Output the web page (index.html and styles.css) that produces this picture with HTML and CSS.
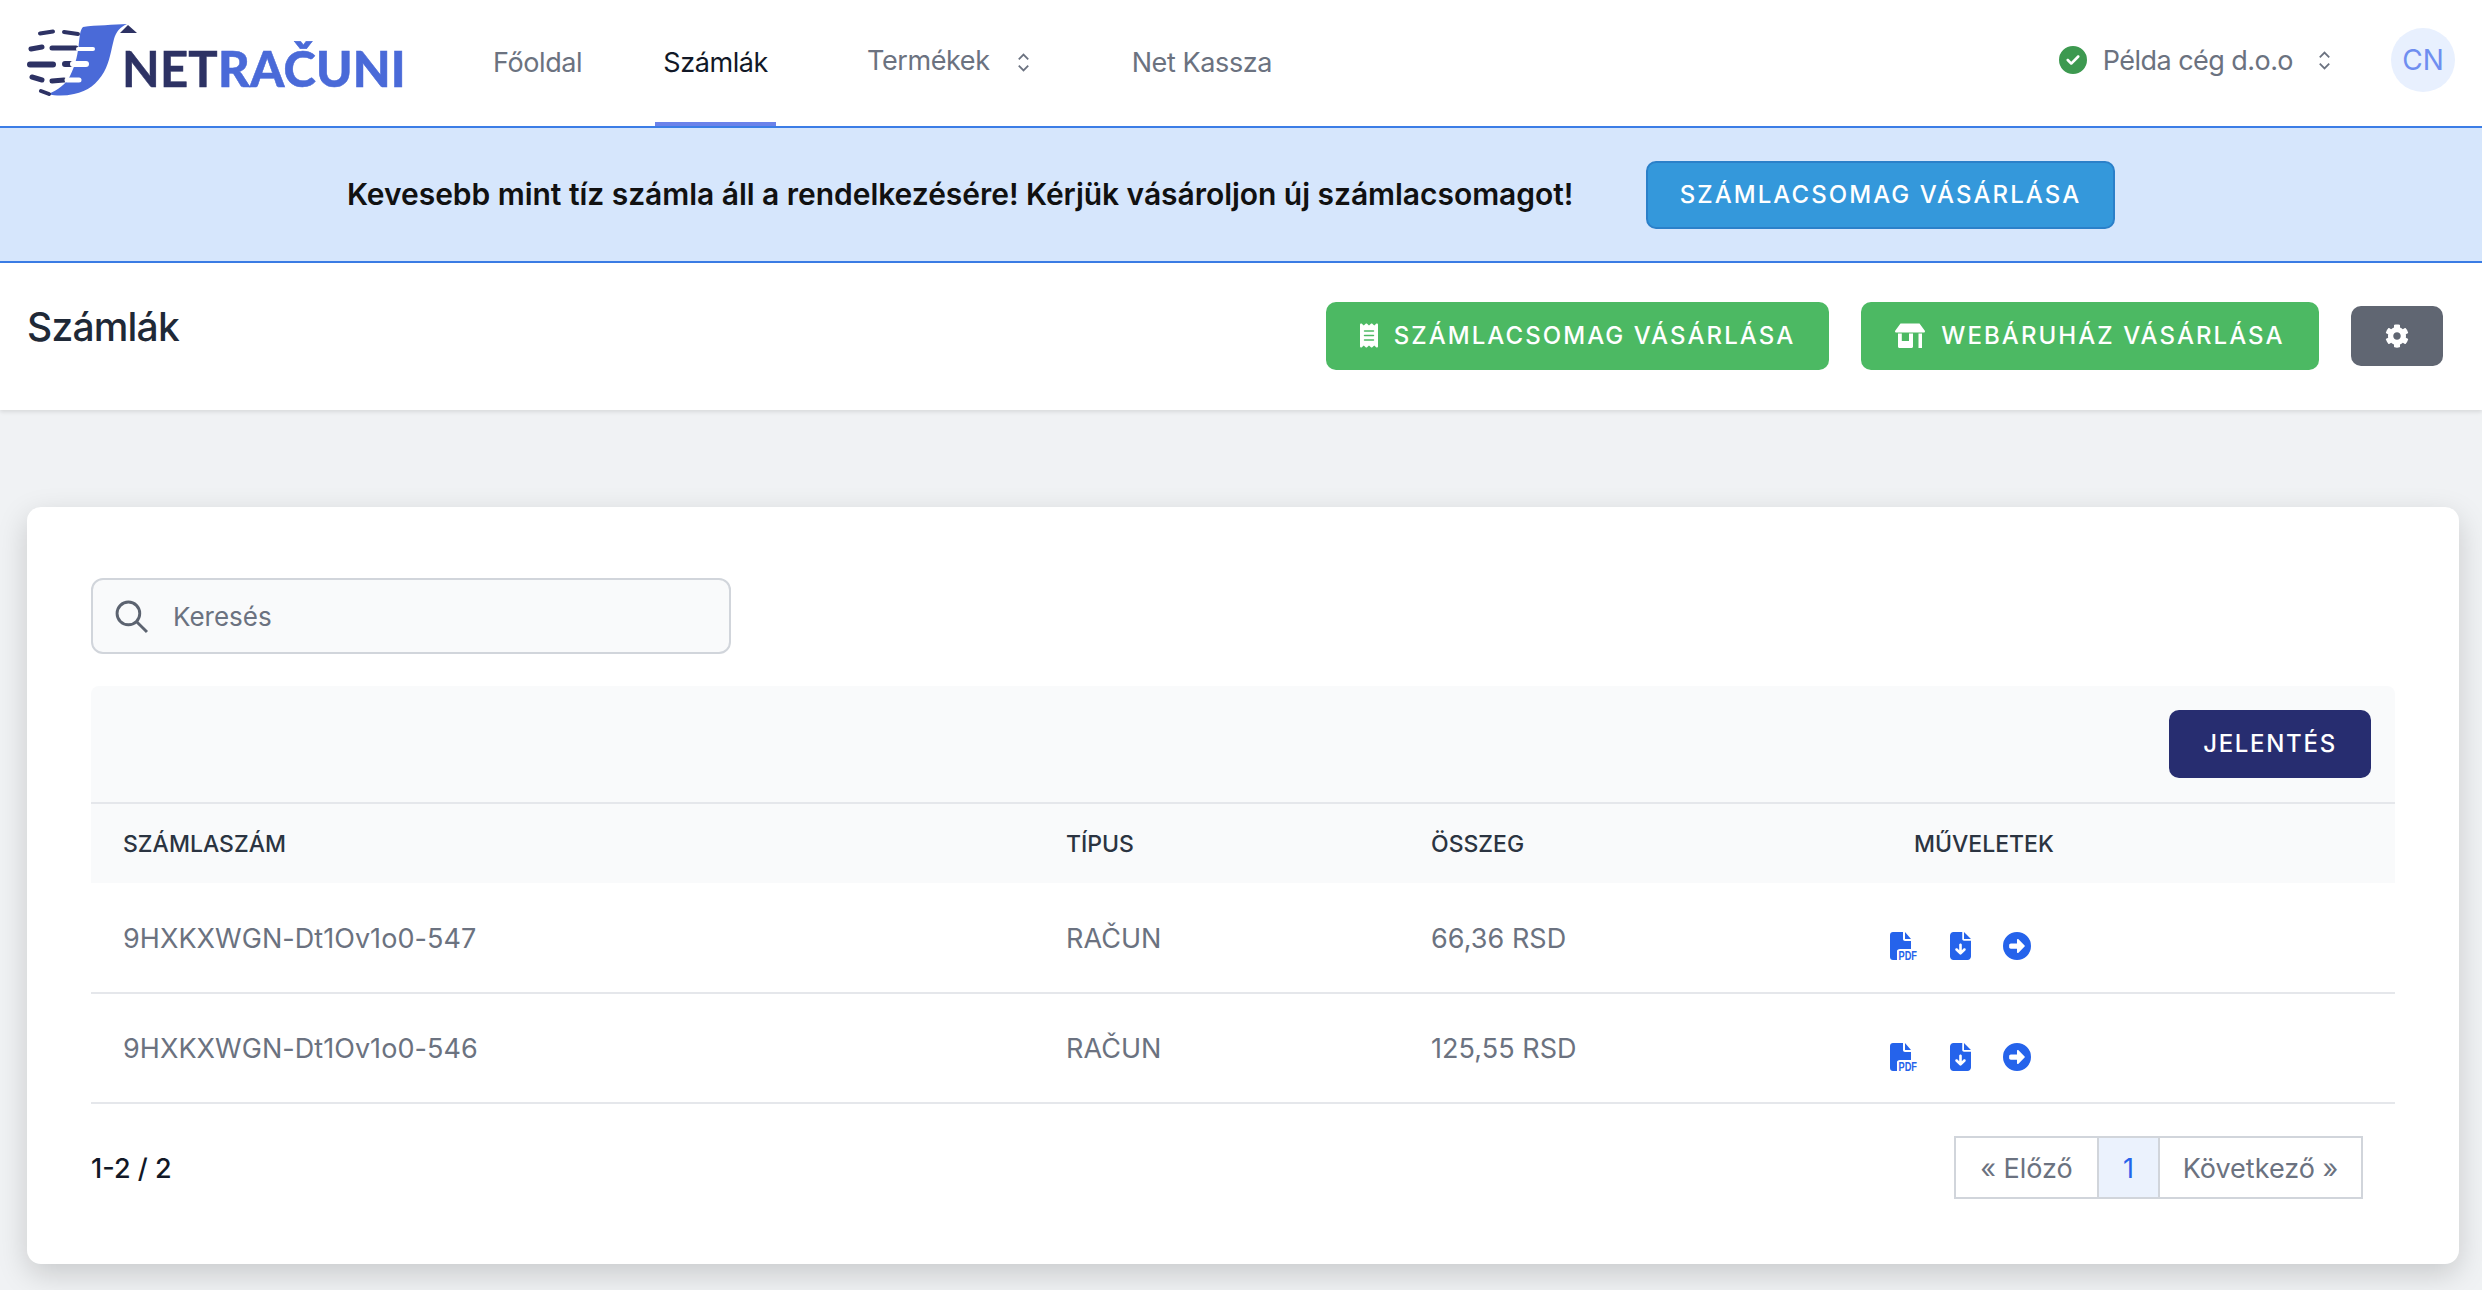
FILE: index.html
```html
<!DOCTYPE html>
<html lang="hu">
<head>
    <meta charset="UTF-8">
    <title>Számlák - NetRačuni</title>
    <link rel="stylesheet" href="styles.css">
</head>
<body>
    <header class="topbar">
        <a class="logo" href="#">
            <svg class="logo-mark" viewBox="7 9 122 72" aria-hidden="true">
                <path class="logo-ribbon" d="M63 12C76 10 94 10 107 9C100 12 96 17 94 24C91 35 90 46 84 57C77 69 68 76 54 79C45 81 36 81 28 79C38 75 46 69 50 61C56 49 58 38 59 27C60 20 60 15 63 12Z"/>
                <path class="logo-tip" d="M100 18L108 10L117 18Z"/>
                <g class="logo-bars">
                    <path stroke-width="4" d="M20 18.5L33 16.5M44 17L58 19"/>
                    <path stroke-width="5" d="M11 34L22 32M32 33H56"/>
                    <path stroke-width="6" d="M10 49.5H33M45 49H51"/>
                    <path stroke-width="5" d="M12 62L22 65M32 66L44 65"/>
                    <path stroke-width="4" d="M21 76L29 79"/>
                </g>
                <g class="logo-cuts">
                    <path stroke-width="4" d="M58 34H73"/>
                    <path stroke-width="6" d="M53 49H66"/>
                    <path stroke-width="5" d="M47 65H59"/>
                </g>
            </svg>
            <span class="logo-text">NET<b>RAČUNI</b></span>
        </a>
        <nav class="main-nav">
            <a class="nav-item" href="#">Főoldal</a>
            <a class="nav-item active" href="#">Számlák</a>
            <a class="nav-item nav-menu" href="#"><span class="nav-label">Termékek</span>
                <svg class="updown" viewBox="0 0 12 20"><path d="M1.5 7L6 2.5L10.5 7M1.5 13L6 17.5L10.5 13"/></svg>
            </a>
            <a class="nav-item" href="#">Net Kassza</a>
        </nav>
        <div class="account">
            <svg class="check" viewBox="0 0 512 512"><path d="M256 512A256 256 0 1 0 256 0a256 256 0 1 0 0 512zM369 209L241 337c-9.400 9.400-24.600 9.400-33.900 0l-64-64c-9.400-9.400-9.400-24.600 0-33.900s24.600-9.400 33.900 0l47 47L335 175c9.400-9.400 24.600-9.400 33.900 0s9.400 24.600 0 33.900z"/></svg>
            <span class="company">Példa cég d.o.o</span>
            <svg class="updown" viewBox="0 0 12 20"><path d="M1.500 7L6 2.500L10.500 7M1.500 13L6 17.500L10.500 13"/></svg>
            <span class="avatar">CN</span>
        </div>
    </header>

    <div class="notice">
        <p>Kevesebb mint tíz számla áll a rendelkezésére! Kérjük vásároljon új számlacsomagot!</p>
        <a class="btn btn-blue" href="#">Számlacsomag vásárlása</a>
    </div>

    <div class="page-head">
        <h1>Számlák</h1>
        <div class="page-actions">
            <a class="btn btn-green btn-package" href="#">
                <svg class="icon-receipt" viewBox="0 0 384 512"><path d="M14 2.200C22.500-1.700 32.500-.3 39.600 5.800L80 40.400 120.400 5.800c9-7.700 22.300-7.700 31.200 0L192 40.400 232.400 5.800c9-7.700 22.200-7.700 31.200 0L304 40.400 344.400 5.800c7.100-6.100 17.100-7.500 25.600-3.600s14 12.400 14 21.800V488c0 9.400-5.500 17.900-14 21.800s-18.500 2.500-25.600-3.600L304 471.600l-40.400 34.600c-9 7.700-22.300 7.700-31.200 0L192 471.600l-40.400 34.600c-9 7.700-22.200 7.700-31.200 0L80 471.600 39.600 506.200c-7.100 6.100-17.100 7.500-25.600 3.600S0 497.400 0 488V24C0 14.600 5.500 6.100 14 2.200zM96 144c-8.800 0-16 7.200-16 16s7.200 16 16 16H288c8.800 0 16-7.200 16-16s-7.200-16-16-16H96zM80 352c0 8.800 7.200 16 16 16H288c8.800 0 16-7.200 16-16s-7.200-16-16-16H96c-8.800 0-16 7.200-16 16zM96 240c-8.800 0-16 7.200-16 16s7.200 16 16 16H288c8.800 0 16-7.200 16-16s-7.200-16-16-16H96z"/></svg>
                Számlacsomag vásárlása
            </a>
            <a class="btn btn-green btn-shop" href="#">
                <svg class="icon-shop" viewBox="0 0 30 25"><path d="M5.500 0.500H24.500L30 8C30 9 29.500 9.500 28.500 9.500H1.500C0.500 9.500 0 9 0 8ZM3 10.500H6.800V18H14V10.500H18V23.500C18 24.400 17.400 25 16.500 25H4.500C3.600 25 3 24.400 3 23.500ZM23.500 10.500H27V25H23.500Z"/></svg>
                Webáruház vásárlása
            </a>
            <a class="btn btn-gear" href="#" aria-label="Beállítások">
                <svg class="icon-gear" viewBox="0 0 512 512"><path d="M487.400 315.700l-42.600-24.600c4.300-23.200 4.300-47 0-70.200l42.600-24.600c4.900-2.800 7.100-8.600 5.500-14-11.100-35.600-30-67.800-54.700-94.600-3.800-4.100-10-5.100-14.800-2.300L380.800 110c-17.900-15.400-38.500-27.300-60.800-35.100V25.800c0-5.600-3.900-10.500-9.400-11.700-36.700-8.200-74.300-7.800-109.200 0-5.500 1.200-9.400 6.100-9.400 11.700V75c-22.200 7.900-42.800 19.800-60.800 35.100L88.700 85.500c-4.900-2.800-11-1.900-14.800 2.300-24.700 26.700-43.600 58.900-54.700 94.600-1.700 5.400.6 11.200 5.500 14L67.300 221c-4.300 23.200-4.300 47 0 70.200l-42.600 24.600c-4.900 2.800-7.100 8.600-5.500 14 11.100 35.600 30 67.800 54.700 94.600 3.800 4.100 10 5.100 14.800 2.300l42.600-24.600c17.900 15.400 38.500 27.300 60.800 35.100v49.200c0 5.600 3.900 10.500 9.400 11.700 36.700 8.200 74.300 7.800 109.200 0 5.500-1.200 9.400-6.100 9.400-11.700v-49.200c22.200-7.900 42.800-19.800 60.800-35.100l42.600 24.600c4.900 2.800 11 1.900 14.800-2.300 24.700-26.700 43.600-58.900 54.700-94.600 1.500-5.500-.7-11.300-5.600-14.100zM256 336c-44.100 0-80-35.900-80-80s35.900-80 80-80 80 35.900 80 80-35.900 80-80 80z"/></svg>
            </a>
        </div>
    </div>

    <main class="content">
        <section class="card">
            <label class="search">
                <svg class="icon-search" viewBox="0 0 32 32"><circle cx="13" cy="13" r="11"/><path d="M21 21L31 31"/></svg>
                <span>Keresés</span>
            </label>

            <div class="table-tools">
                <a class="btn btn-navy" href="#">Jelentés</a>
            </div>

            <table class="invoices">
                <thead>
                    <tr>
                        <th class="col-number">Számlaszám</th>
                        <th class="col-type">Típus</th>
                        <th class="col-amount">Összeg</th>
                        <th class="col-actions">Műveletek</th>
                    </tr>
                </thead>
                <tbody>
                    <tr>
                        <td>9HXKXWGN-Dt1Ov1o0-547</td>
                        <td>RAČUN</td>
                        <td>66,36 RSD</td>
                        <td>
                            <div class="row-actions">
                                <svg class="act act-pdf" viewBox="0 0 28 28"><path d="M3 0H13V7C13 8.100 13.900 9 15 9H21V17H10C8 17 7 18 7 19V28H3C1.300 28 0 26.700 0 25V3C0 1.300 1.300 0 3 0ZM15 0L21 7H15Z"/><text x="8.500" y="28" textLength="18.500" lengthAdjust="spacingAndGlyphs">PDF</text></svg>
                                <svg class="act act-down" viewBox="0 0 384 512"><path d="M64 0C28.700 0 0 28.700 0 64V448c0 35.300 28.700 64 64 64H320c35.300 0 64-28.700 64-64V160H256c-17.700 0-32-14.300-32-32V0H64zM256 0V128H384L256 0zM216 232V334.100l31-31c9.400-9.400 24.600-9.400 33.900 0s9.400 24.600 0 33.900l-72 72c-9.400 9.400-24.600 9.400-33.900 0l-72-72c-9.400-9.400-9.400-24.600 0-33.900s24.600-9.400 33.900 0l31 31V232c0-13.300 10.700-24 24-24s24 10.700 24 24z"/></svg>
                                <svg class="act act-go" viewBox="0 0 512 512"><path d="M0 256a256 256 0 1 0 512 0A256 256 0 1 0 0 256zm395.300 11.300l-112 112c-4.600 4.600-11.500 5.900-17.400 3.500s-9.900-8.300-9.900-14.800V304H144c-17.700 0-32-14.300-32-32V240c0-17.700 14.300-32 32-32H256V144c0-6.500 3.900-12.300 9.900-14.800s12.900-1.100 17.400 3.500l112 112c6.200 6.200 6.200 16.400 0 22.600z"/></svg>
                            </div>
                        </td>
                    </tr>
                    <tr>
                        <td>9HXKXWGN-Dt1Ov1o0-546</td>
                        <td>RAČUN</td>
                        <td>125,55 RSD</td>
                        <td>
                            <div class="row-actions">
                                <svg class="act act-pdf" viewBox="0 0 28 28"><path d="M3 0H13V7C13 8.100 13.900 9 15 9H21V17H10C8 17 7 18 7 19V28H3C1.300 28 0 26.700 0 25V3C0 1.300 1.300 0 3 0ZM15 0L21 7H15Z"/><text x="8.500" y="28" textLength="18.500" lengthAdjust="spacingAndGlyphs">PDF</text></svg>
                                <svg class="act act-down" viewBox="0 0 384 512"><path d="M64 0C28.700 0 0 28.700 0 64V448c0 35.300 28.700 64 64 64H320c35.300 0 64-28.700 64-64V160H256c-17.700 0-32-14.300-32-32V0H64zM256 0V128H384L256 0zM216 232V334.100l31-31c9.400-9.400 24.600-9.400 33.900 0s9.400 24.600 0 33.900l-72 72c-9.400 9.400-24.600 9.400-33.900 0l-72-72c-9.400-9.400-9.400-24.600 0-33.900s24.600-9.400 33.900 0l31 31V232c0-13.300 10.700-24 24-24s24 10.700 24 24z"/></svg>
                                <svg class="act act-go" viewBox="0 0 512 512"><path d="M0 256a256 256 0 1 0 512 0A256 256 0 1 0 0 256zm395.300 11.300l-112 112c-4.600 4.600-11.500 5.900-17.400 3.500s-9.900-8.300-9.900-14.800V304H144c-17.700 0-32-14.300-32-32V240c0-17.700 14.300-32 32-32H256V144c0-6.500 3.900-12.300 9.900-14.800s12.900-1.100 17.400 3.500l112 112c6.200 6.200 6.200 16.400 0 22.600z"/></svg>
                            </div>
                        </td>
                    </tr>
                </tbody>
            </table>

            <div class="table-foot">
                <span class="count">1-2 / 2</span>
                <div class="pager">
                    <a class="pager-prev" href="#">« Előző</a>
                    <a class="pager-page" href="#">1</a>
                    <a class="pager-next" href="#">Következő »</a>
                </div>
            </div>
        </section>
    </main>
</body>
</html>
```

FILE: styles.css
```css
* {
    box-sizing: border-box;
}

html,
body {
    margin: 0;
    padding: 0;
}

body {
    min-height: 1290px;
    overflow: hidden;
    font-family: "Inter", "Noto Sans", sans-serif;
    font-size: 27px;
    color: #6b7280;
    background-color: #f0f2f4;
}

a {
    color: inherit;
    text-decoration: none;
}

/* top bar */
.topbar {
    display: flex;
    align-items: center;
    height: 128px;
    padding: 0 27px;
    background-color: #fff;
    border-bottom: 2px solid #3b7de6;
}

.logo {
    display: flex;
    align-items: flex-start;
    width: 379px;
    height: 72px;
    margin-top: -6px;
}

.logo-mark {
    flex: none;
    width: 122px;
    height: 72px;
}

.logo-ribbon {
    fill: #4a6ad8;
}

.logo-tip {
    fill: #2d3264;
}

.logo-bars path,
.logo-cuts path {
    fill: none;
    stroke-linecap: round;
}

.logo-bars path {
    stroke: #2d3264;
}

.logo-cuts path {
    stroke: #fff;
}

.logo-text {
    margin: 21px 0 0 -27px;
    font-family: "Lato", sans-serif;
    font-size: 49px;
    font-weight: 700;
    line-height: 46px;
    letter-spacing: 0.2px;
    color: #2d3264;
    -webkit-text-stroke: 0.5px currentColor;
}

.logo-text b {
    color: #4a6ad8;
}

.main-nav {
    display: flex;
    align-self: stretch;
    gap: 65px;
    margin-left: 79px;
}

.nav-item {
    display: flex;
    align-items: center;
    height: 126px;
    padding: 2px 8px 0;
    letter-spacing: -0.4px;
    border-bottom: 4px solid transparent;
}

.nav-item.active {
    color: #111827;
    border-bottom-color: #6b82ea;
}

.nav-menu {
    gap: 27px;
    margin: 0 21px 0 18px;
}

.nav-label {
    margin-top: -3px;
}

.updown {
    flex: none;
    width: 13px;
    height: 21px;
    fill: none;
    stroke: #6b7280;
    stroke-width: 1.700;
}

.account {
    display: flex;
    align-items: center;
    margin: -6px 0 0 auto;
}

.check {
    width: 28px;
    height: 28px;
    fill: #3d9950;
}

.company {
    margin: 0 25px 0 16px;
    letter-spacing: -0.55px;
}

.avatar {
    display: flex;
    align-items: center;
    justify-content: center;
    width: 64px;
    height: 64px;
    margin-left: 60px;
    font-size: 28px;
    border-radius: 50%;
    color: #6f8ef0;
    background-color: #e8f0fe;
}

/* notice */
.notice {
    display: flex;
    align-items: center;
    height: 135px;
    padding-left: 347px;
    background-color: #d6e6fc;
    border-bottom: 2px solid #3b7de6;
}

.notice p {
    width: 1299px;
    margin: -2px 0 0;
    font-size: 30px;
    font-weight: 600;
    letter-spacing: -0.04px;
    color: #111;
}

/* buttons */
.btn {
    display: flex;
    align-items: center;
    justify-content: center;
    height: 68px;
    padding-bottom: 1px;
    font-size: 24px;
    font-weight: 500;
    letter-spacing: 2.050px;
    text-transform: uppercase;
    color: #fff;
    border-radius: 10px;
}

.btn-blue {
    width: 469px;
    background-color: #3498db;
    border: 2px solid #2b80c9;
}

.btn-green {
    background-color: #4cb963;
}

.btn-package {
    gap: 16px;
    width: 503px;
}

.btn-shop {
    gap: 16px;
    width: 458px;
}

.btn-gear {
    width: 92px;
    height: 60px;
    background-color: #606672;
}

.btn-navy {
    width: 202px;
    letter-spacing: 1.700px;
    background-color: #272d70;
}

.icon-receipt {
    width: 18px;
    height: 25px;
    fill: #fff;
}

.icon-shop {
    width: 30px;
    height: 25px;
    fill: #fff;
}

.icon-gear {
    width: 24px;
    height: 24px;
    fill: #fff;
}

/* page head */
.page-head {
    display: flex;
    justify-content: space-between;
    align-items: flex-start;
    height: 147px;
    padding: 39px 39px 0 27px;
    background-color: #fff;
    box-shadow: 0 2px 4px rgba(0, 0, 0, 0.1);
}

.page-head h1 {
    margin: 1px 0 0;
    font-size: 39px;
    font-weight: 500;
    line-height: 48px;
    letter-spacing: -0.8px;
    color: #1f2937;
}

.page-actions {
    display: flex;
    align-items: center;
    gap: 32px;
}

/* card */
.content {
    padding: 97px 23px 0 27px;
}

.card {
    height: 757px;
    padding: 71px 64px 0;
    background-color: #fff;
    border-radius: 14px;
    box-shadow: 0 10px 30px rgba(0, 0, 0, 0.17);
}

.search {
    display: flex;
    align-items: center;
    gap: 25px;
    width: 640px;
    height: 76px;
    padding-left: 22px;
    font-size: 26px;
    background-color: #f9fafb;
    border: 2px solid #d1d5db;
    border-radius: 12px;
}

.icon-search {
    width: 33px;
    height: 33px;
    fill: none;
    stroke: #5c6370;
    stroke-width: 2.800;
}

.table-tools {
    display: flex;
    justify-content: flex-end;
    margin-top: 32px;
    padding: 24px 24px 24px;
    background-color: #f9fafb;
    border-radius: 8px 8px 0 0;
}

.invoices {
    width: 100%;
    table-layout: fixed;
    border-collapse: collapse;
}

.invoices th {
    height: 80px;
    padding: 0 0 0 32px;
    font-size: 23px;
    font-weight: 500;
    text-align: left;
    text-transform: uppercase;
    color: #2b3441;
    background-color: #f9fafb;
    border-top: 2px solid #e5e7eb;
}

.invoices td {
    height: 110px;
    padding: 1px 0 0 32px;
    letter-spacing: 0.05px;
    border-bottom: 2px solid #e5e7eb;
}

.col-number {
    width: 943px;
}

.col-type {
    width: 365px;
}

.col-amount {
    width: 483px;
}

.invoices .col-actions {
    padding-left: 32px;
}

.row-actions {
    display: flex;
    align-items: center;
    margin: 16px 0 0 -24px;
}

.act {
    flex: none;
    height: 28px;
    fill: #2563eb;
}

.act-pdf {
    width: 28px;
    overflow: visible;
}

.act-pdf text {
    font-family: "Liberation Sans", sans-serif;
    font-size: 12px;
    font-weight: 700;
}

.act-down {
    width: 21px;
    margin-left: 32px;
}

.act-go {
    width: 28px;
    margin-left: 32px;
}

.table-foot {
    display: flex;
    justify-content: space-between;
    align-items: center;
    padding: 32px 32px 0 0;
}

.count {
    margin-top: 2px;
    font-weight: 500;
    color: #111827;
}

.pager {
    display: flex;
    height: 63px;
    background-color: #fff;
    border: 2px solid #d1d5db;
}

.pager a {
    display: flex;
    align-items: center;
    justify-content: center;
    padding-top: 2px;
}

.pager-prev {
    width: 141px;
}

.pager-page {
    width: 63px;
    color: #2563eb;
    background-color: #ebf2fd;
    border-left: 2px solid #d1d5db;
    border-right: 2px solid #d1d5db;
}

.pager-next {
    width: 201px;
}
```
